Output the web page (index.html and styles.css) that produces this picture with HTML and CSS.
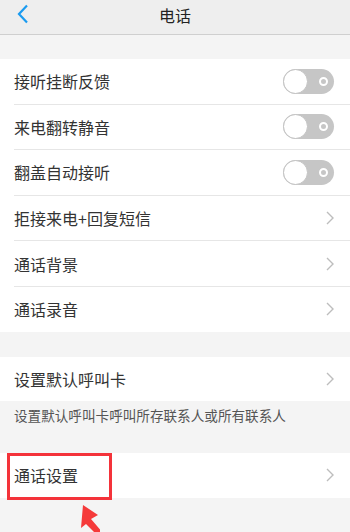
FILE: index.html
```html
<!DOCTYPE html>
<html lang="zh">
<head>
<meta charset="utf-8">
<title>电话</title>
<link rel="stylesheet" href="styles.css">
</head>
<body>
<div class="page">
  <header class="topbar">
    <svg class="back" width="14" height="20" viewBox="0 0 14 20"><polyline points="11,1.5 3,10 11,18.5" fill="none" stroke="#1a9bf0" stroke-width="2.2"/></svg>
    <div class="title">电话</div>
  </header>
  <div class="gap g1"></div>
  <section class="group">
    <div class="row"><span class="label">接听挂断反馈</span><span class="toggle"><span class="knob"></span><span class="ring"></span></span></div>
    <div class="row"><span class="label">来电翻转静音</span><span class="toggle"><span class="knob"></span><span class="ring"></span></span></div>
    <div class="row"><span class="label">翻盖自动接听</span><span class="toggle"><span class="knob"></span><span class="ring"></span></span></div>
    <div class="row"><span class="label">拒接来电+回复短信</span><svg class="chev" width="8" height="14" viewBox="0 0 8 14"><polyline points="1,1 7,7 1,13" fill="none" stroke="#bdbdbd" stroke-width="1.4"/></svg></div>
    <div class="row"><span class="label">通话背景</span><svg class="chev" width="8" height="14" viewBox="0 0 8 14"><polyline points="1,1 7,7 1,13" fill="none" stroke="#bdbdbd" stroke-width="1.4"/></svg></div>
    <div class="row"><span class="label">通话录音</span><svg class="chev" width="8" height="14" viewBox="0 0 8 14"><polyline points="1,1 7,7 1,13" fill="none" stroke="#bdbdbd" stroke-width="1.4"/></svg></div>
  </section>
  <div class="gap g2"></div>
  <section class="group">
    <div class="row single"><span class="label">设置默认呼叫卡</span><svg class="chev" width="8" height="14" viewBox="0 0 8 14"><polyline points="1,1 7,7 1,13" fill="none" stroke="#bdbdbd" stroke-width="1.4"/></svg></div>
  </section>
  <div class="caption">设置默认呼叫卡呼叫所存联系人或所有联系人</div>
  <section class="group">
    <div class="row single last"><span class="label">通话设置</span><svg class="chev" width="8" height="14" viewBox="0 0 8 14"><polyline points="1,1 7,7 1,13" fill="none" stroke="#bdbdbd" stroke-width="1.4"/></svg></div>
  </section>
  <div class="highlight"></div>
  <svg class="arrow" width="40" height="34" viewBox="0 0 40 34"><polygon points="23,5 21,28 26,24 36,34 44,34 31,19 38,15" fill="#f53a3a"/></svg>
</div>
</body>
</html>
```
FILE: styles.css
```css
html, body {
  margin: 0;
  padding: 0;
  background: #f4f4f4;
}
.page {
  position: relative;
  width: 350px;
  height: 532px;
  overflow: hidden;
  font-family: "Noto Sans CJK SC", "Noto Sans", sans-serif;
  color: #333;
}
.topbar {
  height: 34px;
  background: #eeeeee;
  border-bottom: 1px solid #cfcfcf;
  display: flex;
  align-items: center;
  justify-content: center;
  position: relative;
}
.back {
  position: absolute;
  left: 16px;
  top: 4px;
}
.title {
  font-size: 16px;
  color: #222;
  margin-top: -5px;
}
.gap.g1 { height: 24px; }
.gap.g2 { height: 25px; }
.group {
  background: #fff;
}
.row {
  height: 44.6px;
  margin-left: 14px;
  padding-right: 16px;
  border-bottom: 1px solid #e6e6e6;
  display: flex;
  align-items: center;
  justify-content: space-between;
}
.row:last-child { border-bottom: none; }
.row.single { height: 44px; }
.row.last { height: 45px; }
.label {
  font-size: 16px;
  color: #333;
}
.toggle {
  position: relative;
  width: 51px;
  height: 25px;
  border-radius: 13px;
  background: #c6c6c6;
}
.knob {
  position: absolute;
  left: 0;
  top: 0;
  width: 23px;
  height: 23px;
  border-radius: 50%;
  background: #fff;
  border: 1px solid #c2c2c2;
}
.ring {
  position: absolute;
  left: 36px;
  top: 8px;
  width: 5px;
  height: 5px;
  border-radius: 50%;
  border: 2px solid #fff;
}
.chev { display: block; }
.caption {
  height: 52px;
  box-sizing: border-box;
  padding: 4px 0 0 14px;
  font-size: 13.6px;
  color: #555;
}
.highlight {
  position: absolute;
  left: 7px;
  top: 453px;
  width: 99px;
  height: 41px;
  border: 3px solid #f4333a;
}
.arrow {
  position: absolute;
  left: 60px;
  top: 500px;
}
```
